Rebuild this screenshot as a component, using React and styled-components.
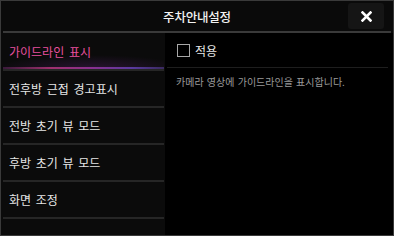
import React, { useState } from "react";
import styled, { createGlobalStyle } from "styled-components";

const GlobalStyle = createGlobalStyle`
  html, body {
    margin: 0;
    padding: 0;
    background: #ffffff;
  }
  * {
    box-sizing: border-box;
  }
`;

const Frame = styled.div`
  width: 394px;
  height: 236px;
  border: 1px solid #3a3a3a;
  background: #0a0a0a;
  display: flex;
  flex-direction: column;
  font-family: "Noto Sans CJK KR", "Noto Sans", sans-serif;
  overflow: hidden;
`;

const Header = styled.header`
  position: relative;
  height: 32px;
  margin: 0 2px 0 2px;
  border-bottom: 2px solid #3a3a3a;
  display: flex;
  align-items: center;
  justify-content: center;
`;

const Title = styled.h1`
  margin: 0;
  font-size: 12.5px;
  font-weight: 500;
  color: #f2f2f2;
  letter-spacing: -0.2px;
`;

const CloseButton = styled.button`
  position: absolute;
  right: 7px;
  top: 2px;
  width: 36px;
  height: 26px;
  border: none;
  border-radius: 3px;
  background: #151515;
  display: flex;
  align-items: center;
  justify-content: center;
  padding: 0;
  cursor: pointer;
`;

const Body = styled.div`
  flex: 1;
  display: flex;
  min-height: 0;
`;

const Menu = styled.nav`
  width: 164px;
  background: #0b0b0b;
  display: flex;
  flex-direction: column;
  padding: 1px 0 0;
`;

const MenuItem = styled.div`
  position: relative;
  height: 37px;
  margin: 0 1px 0 2px;
  padding-left: 6px;
  border-bottom: 2px solid #262626;
  display: flex;
  align-items: center;
  font-size: 12px;
  word-spacing: 2px;
  color: ${(p) => (p.$active ? "#e8509f" : "#e6e6e6")};
  background: ${(p) =>
    p.$active
      ? "radial-gradient(ellipse 60% 40% at 55% 100%, rgba(110, 40, 140, 0.3), rgba(0, 0, 0, 0))"
      : "transparent"};
  cursor: pointer;

  &::after {
    content: "";
    display: ${(p) => (p.$active ? "block" : "none")};
    position: absolute;
    left: 0;
    right: 0;
    bottom: 0;
    height: 2px;
    background: linear-gradient(
      90deg,
      #3a1a3a 0%,
      #a0306e 30%,
      #8a3090 55%,
      #5a3aa0 80%,
      #3a2a60 100%
    );
  }
`;

const Content = styled.section`
  flex: 1;
  background: #000000;
  padding: 0 5px 0 2px;
`;

const OptionRow = styled.label`
  height: 35px;
  padding-left: 10px;
  border-bottom: 1px solid #1e1e1e;
  display: flex;
  align-items: center;
  gap: 5px;
  font-size: 12px;
  color: #e8e8e8;
  cursor: pointer;
`;

const CheckBox = styled.span`
  width: 13px;
  height: 13px;
  border: 1.5px solid #a8a8a8;
  display: flex;
  align-items: center;
  justify-content: center;
`;

const Description = styled.p`
  margin: 6px 0 0 9px;
  font-size: 10px;
  word-spacing: 1px;
  color: #9a9a9a;
`;

const menuItems = [
  "가이드라인 표시",
  "전후방 근접 경고표시",
  "전방 초기 뷰 모드",
  "후방 초기 뷰 모드",
  "화면 조정",
];

export default function App() {
  const [active, setActive] = useState(0);
  const [checked, setChecked] = useState(false);

  return (
    <>
      <GlobalStyle />
      <Frame>
        <Header>
          <Title>주차안내설정</Title>
          <CloseButton aria-label="닫기">
            <svg width="11" height="11" viewBox="0 0 11 11">
              <path
                d="M1.5 1.5 L9.5 9.5 M9.5 1.5 L1.5 9.5"
                stroke="#ffffff"
                strokeWidth="2.6"
                strokeLinecap="square"
              />
            </svg>
          </CloseButton>
        </Header>
        <Body>
          <Menu>
            {menuItems.map((label, i) => (
              <MenuItem
                key={label}
                $active={i === active}
                onClick={() => setActive(i)}
              >
                {label}
              </MenuItem>
            ))}
          </Menu>
          <Content>
            <OptionRow onClick={() => setChecked(!checked)}>
              <CheckBox>
                {checked && (
                  <svg width="9" height="9" viewBox="0 0 9 9">
                    <path
                      d="M1 4.5 L3.5 7 L8 1.5"
                      stroke="#e8509f"
                      strokeWidth="1.6"
                      fill="none"
                    />
                  </svg>
                )}
              </CheckBox>
              적용
            </OptionRow>
            <Description>카메라 영상에 가이드라인을 표시합니다.</Description>
          </Content>
        </Body>
      </Frame>
    </>
  );
}
